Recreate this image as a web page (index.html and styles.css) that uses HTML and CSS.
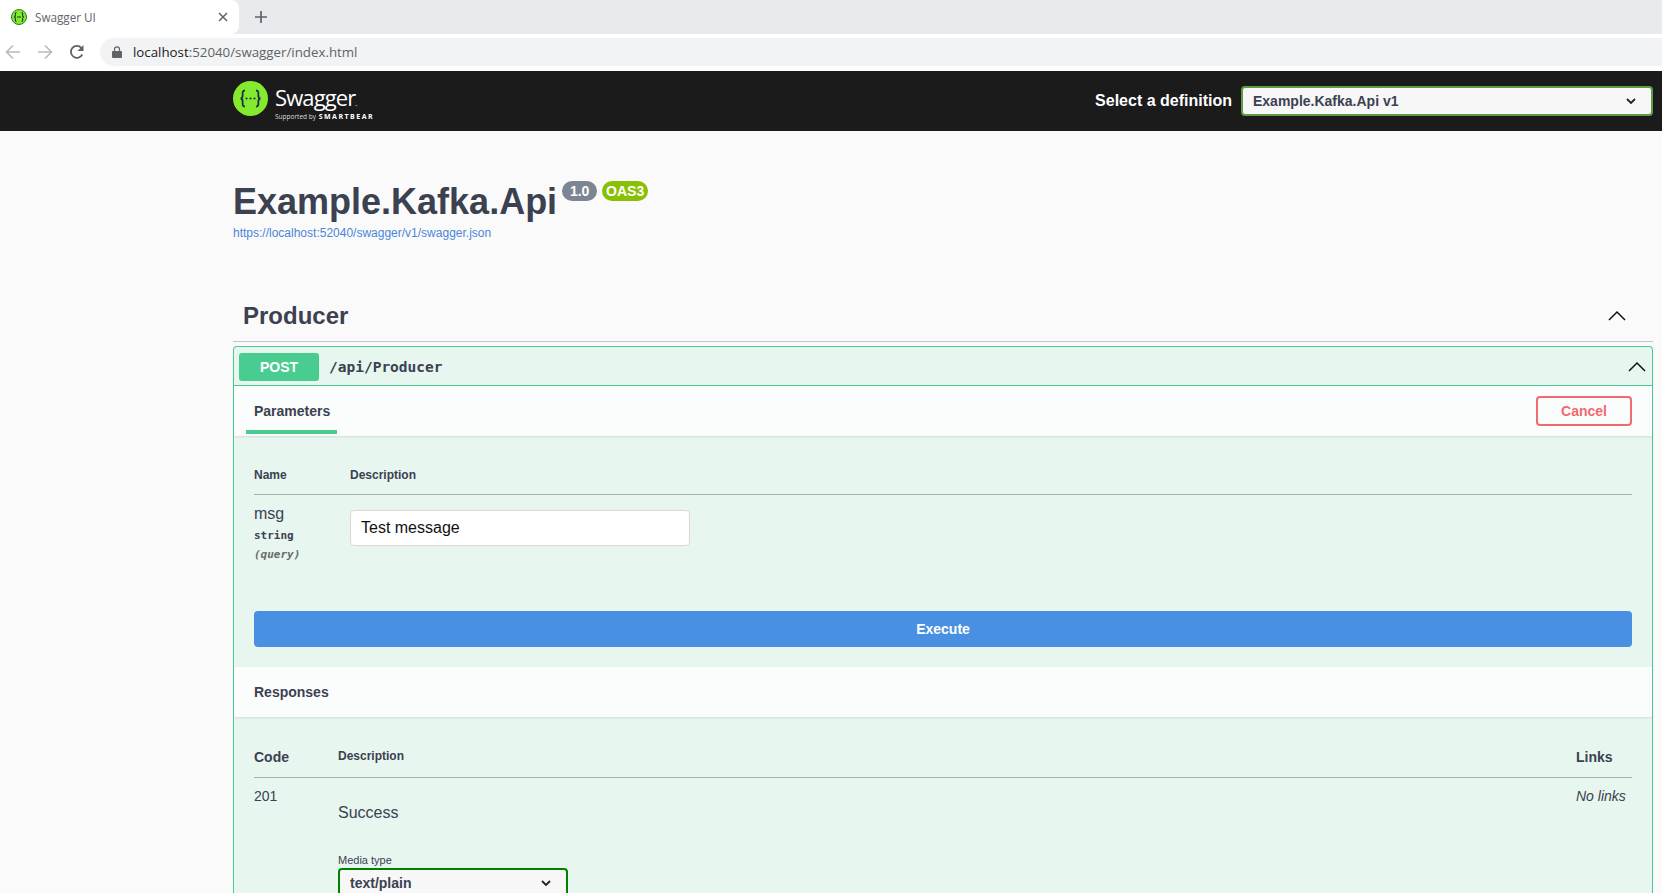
FILE: index.html
```html
<!DOCTYPE html>
<html lang="en">
<head>
<meta charset="UTF-8" />
<title>Swagger UI</title>
<link rel="stylesheet" href="styles.css">
</head>
<body>

<div class="tab-strip">
  <div class="tab">
    <svg class="favicon" width="16" height="16" viewBox="0 0 16 16">
      <circle cx="8" cy="8" r="7.5" fill="#85ea2d" stroke="#2f7d1a" />
      <path d="M5.5 3.5C4 3.5 4.4 5 4.4 6.3S4 8 3 8c1 0 1.400.4 1.400 1.700S4 12.500 5.500 12.500M10.500 3.500C12 3.500 11.600 5 11.600 6.300S12 8 13 8c-1 0-1.400.4-1.400 1.700s.4 2.800-1.100 2.800M6 8h4" fill="none" stroke="#173647" stroke-width="1.100" />
    </svg>
    <span class="tab-title">Swagger UI</span>
    <svg class="tab-close" width="10" height="10" viewBox="0 0 10 10">
      <path d="M1 1l8 8M9 1l-8 8" stroke="#5f6368" stroke-width="1.500" />
    </svg>
  </div>
  <svg class="new-tab" width="14" height="14" viewBox="0 0 14 14">
    <path d="M7 1v12M1 7h12" stroke="#5f6368" stroke-width="1.700" />
  </svg>
</div>

<div class="toolbar">
  <svg class="nav-icon" width="16" height="16" viewBox="0 0 16 16">
    <path d="M15 8H2M8 1.500L1.500 8 8 14.500" fill="none" stroke="#b9bbbe" stroke-width="1.600" />
  </svg>
  <svg class="nav-icon" width="16" height="16" viewBox="0 0 16 16">
    <path d="M1 8h13M8 1.500L14.500 8 8 14.500" fill="none" stroke="#b9bbbe" stroke-width="1.600" />
  </svg>
  <svg class="nav-icon" width="16" height="16" viewBox="0 0 16 16">
    <path d="M13.300 10.500A6 6 0 1 1 12.400 3.800" fill="none" stroke="#5f6368" stroke-width="1.800" />
    <path d="M14.500 1v6h-6z" fill="#5f6368" />
  </svg>
  <div class="address">
    <svg width="10" height="12" viewBox="0 0 10 12">
      <path d="M1 5h8a1 1 0 0 1 1 1v5a1 1 0 0 1-1 1H1a1 1 0 0 1-1-1V6a1 1 0 0 1 1-1z" fill="#5f6368" />
      <path d="M2.500 5V3.300a2.500 2.500 0 0 1 5 0V5" fill="none" stroke="#5f6368" stroke-width="1.200" />
    </svg>
    <span class="url"><span class="url-host">localhost</span>:52040/swagger/index.html</span>
  </div>
</div>

<div class="topbar">
  <div class="logo">
    <svg width="35" height="35" viewBox="0 0 35 35">
      <circle cx="17.500" cy="17.500" r="17.500" fill="#85ea2d" />
      <path d="M12 9.500c-3 0-2.300 2.500-2.300 4.500s-.6 3.500-2.200 3.500c1.600 0 2.200 1.500 2.200 3.500s-.7 4.500 2.300 4.500M23 9.500c3 0 2.300 2.500 2.300 4.500s.6 3.500 2.200 3.500c-1.600 0-2.200 1.500-2.200 3.500s.7 4.500-2.300 4.500" fill="none" stroke="#173647" stroke-width="1.800" />
      <circle cx="13.500" cy="17.500" r="1.100" fill="#173647" />
      <circle cx="17.500" cy="17.500" r="1.100" fill="#173647" />
      <circle cx="21.500" cy="17.500" r="1.100" fill="#173647" />
    </svg>
    <div class="logo-text">
      <div class="logo-name">Swagger<span class="logo-tm">.</span></div>
      <div class="logo-sub">Supported by <b>SMARTBEAR</b></div>
    </div>
  </div>
  <div class="definition">
    <span class="definition-label">Select a definition</span>
    <div class="definition-select">
      <span>Example.Kafka.Api v1</span>
      <svg width="10" height="7" viewBox="0 0 10 7">
        <path d="M1 1l4 4 4-4" fill="none" stroke="#222" stroke-width="1.800" />
      </svg>
    </div>
  </div>
</div>

<div class="page">
  <div class="info">
    <div class="title-row">
      <h1>Example.Kafka.Api</h1>
      <span class="badge badge-version">1.0</span>
      <span class="badge badge-oas">OAS3</span>
    </div>
    <a class="spec-link">https://localhost:52040/swagger/v1/swagger.json</a>
  </div>

  <div class="section-head">
    <h2>Producer</h2>
    <svg width="20" height="20" viewBox="0 0 20 20">
      <path d="M2 14l8-8 8 8" fill="none" stroke="#111" stroke-width="1.500" />
    </svg>
  </div>

  <div class="opblock">
    <div class="opblock-head">
      <span class="method">POST</span>
      <span class="path">/api/Producer</span>
      <svg width="20" height="20" viewBox="0 0 20 20">
        <path d="M2 14l8-8 8 8" fill="none" stroke="#111" stroke-width="1.500" />
      </svg>
    </div>

    <div class="band band-tabs">
      <div class="tab-item">Parameters</div>
      <button class="btn-cancel">Cancel</button>
    </div>

    <div class="params">
      <div class="params-head">
        <span>Name</span>
        <span>Description</span>
      </div>
      <div class="params-row">
        <div class="param-name">
          <div class="param-title">msg</div>
          <div class="param-type">string</div>
          <div class="param-in">(query)</div>
        </div>
        <input class="param-input" type="text" value="Test message">
      </div>
      <button class="btn-execute">Execute</button>
    </div>

    <div class="band band-responses">
      <h4>Responses</h4>
    </div>

    <div class="responses">
      <div class="resp-head">
        <span class="col-strong">Code</span>
        <span class="col-small">Description</span>
        <span class="col-strong">Links</span>
      </div>
      <div class="resp-row">
        <div class="resp-code">201</div>
        <div>
          <div class="resp-desc">Success</div>
          <div class="media-label">Media type</div>
          <div class="media-select">
            <span>text/plain</span>
            <svg width="10" height="7" viewBox="0 0 10 7">
              <path d="M1 1l4 4 4-4" fill="none" stroke="#222" stroke-width="1.800" />
            </svg>
          </div>
        </div>
        <div class="resp-links">No links</div>
      </div>
    </div>
  </div>
</div>

</body>
</html>
```

FILE: styles.css
```css
html, body {
  height: 893px;
  overflow: hidden;
}
body {
  margin: 0;
  background-color: #fafafa;
  font-family: "Liberation Sans", Arial, sans-serif;
  color: #3b4151;
}
h1, h2, h4 {
  margin: 0;
}

/* browser chrome */
.tab-strip {
  display: flex;
  align-items: center;
  height: 34px;
  background-color: #e8eaed;
}
.tab {
  display: flex;
  align-items: center;
  width: 239px;
  height: 34px;
  box-sizing: border-box;
  padding: 0 11px 0 11px;
  background-color: #fff;
  border-bottom-right-radius: 8px;
  border-top-right-radius: 8px;
}
.tab-title {
  flex: 1;
  margin-left: 8px;
  font-family: "Open Sans", sans-serif;
  font-size: 11.700px;
  color: #5f6368;
}
.new-tab {
  margin-left: 15px;
}
.toolbar {
  display: flex;
  align-items: center;
  height: 37px;
  box-sizing: border-box;
  padding: 4px 0 5px 5px;
  background-color: #fff;
}
.nav-icon {
  margin-right: 16px;
}
.address {
  display: flex;
  align-items: center;
  flex: 1;
  height: 28px;
  margin-left: -1px;
  padding-left: 12px;
  background-color: #f1f3f4;
  border-radius: 14px 0 0 14px;
}
.url {
  margin-left: 11px;
  font-family: "Open Sans", sans-serif;
  font-size: 13.300px;
  color: #5f6368;
}
.url-host {
  color: #202124;
}

/* swagger top bar */
.topbar {
  display: flex;
  align-items: center;
  justify-content: space-between;
  height: 60px;
  box-sizing: border-box;
  padding: 0 9px 0 233px;
  background-color: #1b1b1b;
}
.logo {
  display: flex;
  align-items: center;
  gap: 7px;
  margin-top: -5px;
}
.logo-text {
  padding-top: 10px;
  color: #fff;
  font-family: "Open Sans", sans-serif;
}
.logo-name {
  font-size: 22px;
  line-height: 20px;
  letter-spacing: -0.900px;
}
.logo-tm {
  font-size: 8px;
}
.logo-sub {
  font-size: 6.500px;
  line-height: 8px;
  color: #ddd;
}
.logo-sub b {
  margin-left: 1px;
  font-size: 7px;
  letter-spacing: 1.500px;
  color: #fff;
}
.definition {
  display: flex;
  align-items: center;
  gap: 9px;
}
.definition-label {
  font-size: 16px;
  font-weight: bold;
  color: #fff;
}
.definition-select {
  display: flex;
  align-items: center;
  justify-content: space-between;
  width: 412px;
  height: 30px;
  box-sizing: border-box;
  padding: 0 15px 0 10px;
  background-color: #f7f7f7;
  border: 2px solid #5f9a44;
  border-radius: 4px;
  font-size: 14px;
  font-weight: bold;
}

/* page content */
.page {
  padding: 0 9px 0 233px;
}
.info {
  padding-top: 51px;
}
.title-row {
  display: flex;
  align-items: flex-start;
}
.title-row h1 {
  font-size: 36px;
  line-height: 40px;
  font-weight: bold;
}
.badge {
  height: 20px;
  margin-top: -1px;
  border-radius: 10px;
  color: #fff;
  font-size: 14px;
  font-weight: bold;
  line-height: 20px;
  text-align: center;
}
.badge-version {
  width: 35px;
  margin-left: 5px;
  background-color: #7d8492;
}
.badge-oas {
  width: 46px;
  margin-left: 5px;
  background-color: #89bf04;
}
.spec-link {
  display: block;
  margin-top: 4px;
  font-size: 12px;
  line-height: 14px;
  color: #4a86d8;
}
.section-head {
  display: flex;
  align-items: center;
  justify-content: space-between;
  height: 40px;
  margin-top: 56px;
  padding: 0 26px 5px 10px;
  border-bottom: 1px solid #c0c3c9;
}
.section-head h2 {
  font-size: 24px;
  font-weight: bold;
}

/* operation block */
.opblock {
  margin-top: 4px;
  background-color: #e7f6ef;
  border: 1px solid #49cc90;
  border-bottom: none;
  border-radius: 4px 4px 0 0;
}
.opblock-head {
  display: flex;
  align-items: center;
  height: 36px;
  padding: 2px 0 0 5px;
  border-bottom: 1px solid #49cc90;
}
.opblock-head svg {
  margin-right: 5px;
}
.method {
  width: 80px;
  height: 28px;
  background-color: #49cc90;
  border-radius: 3px;
  color: #fff;
  font-size: 14px;
  font-weight: bold;
  line-height: 28px;
  text-align: center;
}
.path {
  flex: 1;
  margin-left: 10px;
  font-family: "DejaVu Sans Mono", monospace;
  font-size: 14.500px;
  font-weight: bold;
}
.band {
  background-color: #fbfdfc;
  box-shadow: 0 1px 2px rgba(0,0,0,0.1);
}
.band-tabs {
  display: flex;
  align-items: flex-start;
  justify-content: space-between;
  height: 50px;
  padding: 0 20px 0 12px;
}
.tab-item {
  width: 91px;
  height: 48px;
  box-sizing: border-box;
  padding: 17px 0 0 8px;
  border-bottom: 4px solid #49cc90;
  font-size: 14px;
  font-weight: bold;
  line-height: 16px;
}
.btn-cancel {
  width: 96px;
  height: 30px;
  margin-top: 10px;
  background-color: transparent;
  border: 2px solid #f06a6f;
  border-radius: 4px;
  color: #f06a6f;
  font-family: inherit;
  font-size: 14px;
  font-weight: bold;
}
.params {
  padding: 32px 20px 20px;
}
.params-head {
  display: grid;
  grid-template-columns: 96px 1fr;
  padding-bottom: 12px;
  border-bottom: 1px solid #a8b0ad;
  font-size: 12px;
  font-weight: bold;
  line-height: 14px;
}
.params-row {
  display: flex;
  height: 116px;
}
.param-name {
  width: 96px;
  padding-top: 10px;
}
.param-title {
  font-size: 16px;
  line-height: 18px;
}
.param-type, .param-in {
  font-family: "DejaVu Sans Mono", monospace;
  font-size: 11px;
  line-height: 19px;
}
.param-type {
  margin-top: 3px;
  font-weight: bold;
}
.param-in {
  color: #6b6b6b;
  font-style: italic;
  font-weight: bold;
}
.param-input {
  width: 340px;
  height: 36px;
  box-sizing: border-box;
  margin: 15px 0 0;
  padding: 0 10px;
  background-color: #fff;
  border: 1px solid #d9d9d9;
  border-radius: 4px;
  color: #111;
  font-family: inherit;
  font-size: 16px;
}
.btn-execute {
  display: block;
  width: 100%;
  height: 36px;
  background-color: #4990e2;
  border: none;
  border-radius: 4px;
  color: #fff;
  font-family: inherit;
  font-size: 14px;
  font-weight: bold;
}
.band-responses {
  height: 50px;
  padding: 0 20px;
}
.band-responses h4 {
  font-size: 14px;
  line-height: 50px;
}
.responses {
  padding: 32px 20px 0;
}
.resp-head, .resp-row {
  display: grid;
  grid-template-columns: 84px 1fr 56px;
}
.resp-head {
  align-items: start;
  height: 28px;
  border-bottom: 1px solid #a8b0ad;
}
.col-strong {
  font-size: 14px;
  font-weight: bold;
  line-height: 16px;
}
.col-small {
  font-size: 12px;
  font-weight: bold;
  line-height: 14px;
}
.resp-row {
  padding-top: 10px;
}
.resp-code {
  font-size: 14px;
  line-height: 16px;
}
.resp-desc {
  margin-top: 16px;
  font-size: 16px;
  line-height: 18px;
}
.media-label {
  margin-top: 31px;
  font-size: 11px;
  line-height: 14px;
}
.media-select {
  display: flex;
  align-items: center;
  justify-content: space-between;
  width: 230px;
  height: 30px;
  box-sizing: border-box;
  margin-top: 1px;
  padding: 0 15px 0 10px;
  background-color: #f7f7f7;
  border: 2px solid #008000;
  border-radius: 4px;
  font-size: 14px;
  font-weight: bold;
}
.resp-links {
  font-size: 14px;
  font-style: italic;
  line-height: 16px;
}
```
